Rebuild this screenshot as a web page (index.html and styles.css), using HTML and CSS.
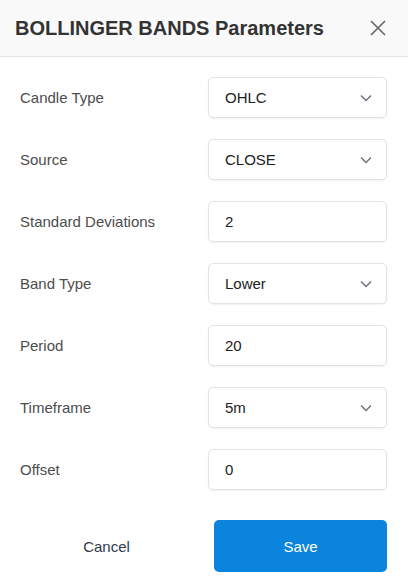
FILE: index.html
```html
<!DOCTYPE html>
<html>
<head>
<meta charset="utf-8">
<link rel="stylesheet" href="styles.css">
</head>
<body>
<div class="modal">
  <div class="header">
    <div class="title">BOLLINGER BANDS Parameters</div>
    <svg class="close" width="18" height="18" viewBox="0 0 18 18"><path d="M2 2L16 16M16 2L2 16" stroke="#666" stroke-width="1.6" fill="none"/></svg>
  </div>
  <div class="body">
    <div class="row"><div class="label">Candle Type</div><div class="field"><span>OHLC</span><svg class="chev" width="12" height="8" viewBox="0 0 12 8"><path d="M1 1.5L6 6.5L11 1.5" stroke="#6b7280" stroke-width="1.5" fill="none"/></svg></div></div>
    <div class="row"><div class="label">Source</div><div class="field"><span>CLOSE</span><svg class="chev" width="12" height="8" viewBox="0 0 12 8"><path d="M1 1.5L6 6.5L11 1.5" stroke="#6b7280" stroke-width="1.5" fill="none"/></svg></div></div>
    <div class="row"><div class="label">Standard Deviations</div><div class="field"><span>2</span></div></div>
    <div class="row"><div class="label">Band Type</div><div class="field"><span>Lower</span><svg class="chev" width="12" height="8" viewBox="0 0 12 8"><path d="M1 1.5L6 6.5L11 1.5" stroke="#6b7280" stroke-width="1.5" fill="none"/></svg></div></div>
    <div class="row"><div class="label">Period</div><div class="field"><span>20</span></div></div>
    <div class="row"><div class="label">Timeframe</div><div class="field"><span>5m</span><svg class="chev" width="12" height="8" viewBox="0 0 12 8"><path d="M1 1.5L6 6.5L11 1.5" stroke="#6b7280" stroke-width="1.5" fill="none"/></svg></div></div>
    <div class="row"><div class="label">Offset</div><div class="field"><span>0</span></div></div>
  </div>
  <div class="footer">
    <div class="btn cancel">Cancel</div>
    <div class="btn save">Save</div>
  </div>
</div>
</body>
</html>
```
FILE: styles.css
```css
* { box-sizing: border-box; }
html, body { margin: 0; padding: 0; background: #fff; }
body { font-family: "Liberation Sans", Arial, sans-serif; width: 408px; height: 587px; overflow: hidden; }
.modal { display: flex; flex-direction: column; }
.header {
  height: 57px;
  background: #f9f9f9;
  border-bottom: 1px solid #e4e4e4;
  display: flex;
  align-items: center;
  justify-content: space-between;
  padding: 0 21px 0 15px;
}
.title { font-size: 20px; font-weight: bold; color: #333; }
.close { display: block; }
.body { padding: 20px 21px 0 20px; display: flex; flex-direction: column; gap: 21px; }
.row { display: flex; align-items: center; justify-content: space-between; height: 41px; }
.label { font-size: 15px; color: #4d4d4d; }
.field {
  width: 179px;
  height: 41px;
  border: 1px solid #e2e2e2;
  border-radius: 5px;
  box-shadow: 0 1px 2px rgba(0,0,0,0.06);
  display: flex;
  align-items: center;
  justify-content: space-between;
  padding: 0 14px 0 16px;
  font-size: 15px;
  color: #222;
}
.chev { display: block; }
.footer { display: flex; gap: 21px; padding: 30px 21px 0 20px; }
.btn { flex: 1; height: 52px; display: flex; align-items: center; justify-content: center; font-size: 15px; border-radius: 5px; }
.cancel { color: #2f3b4c; }
.save { background: #0a84dc; color: #fff; }
```
